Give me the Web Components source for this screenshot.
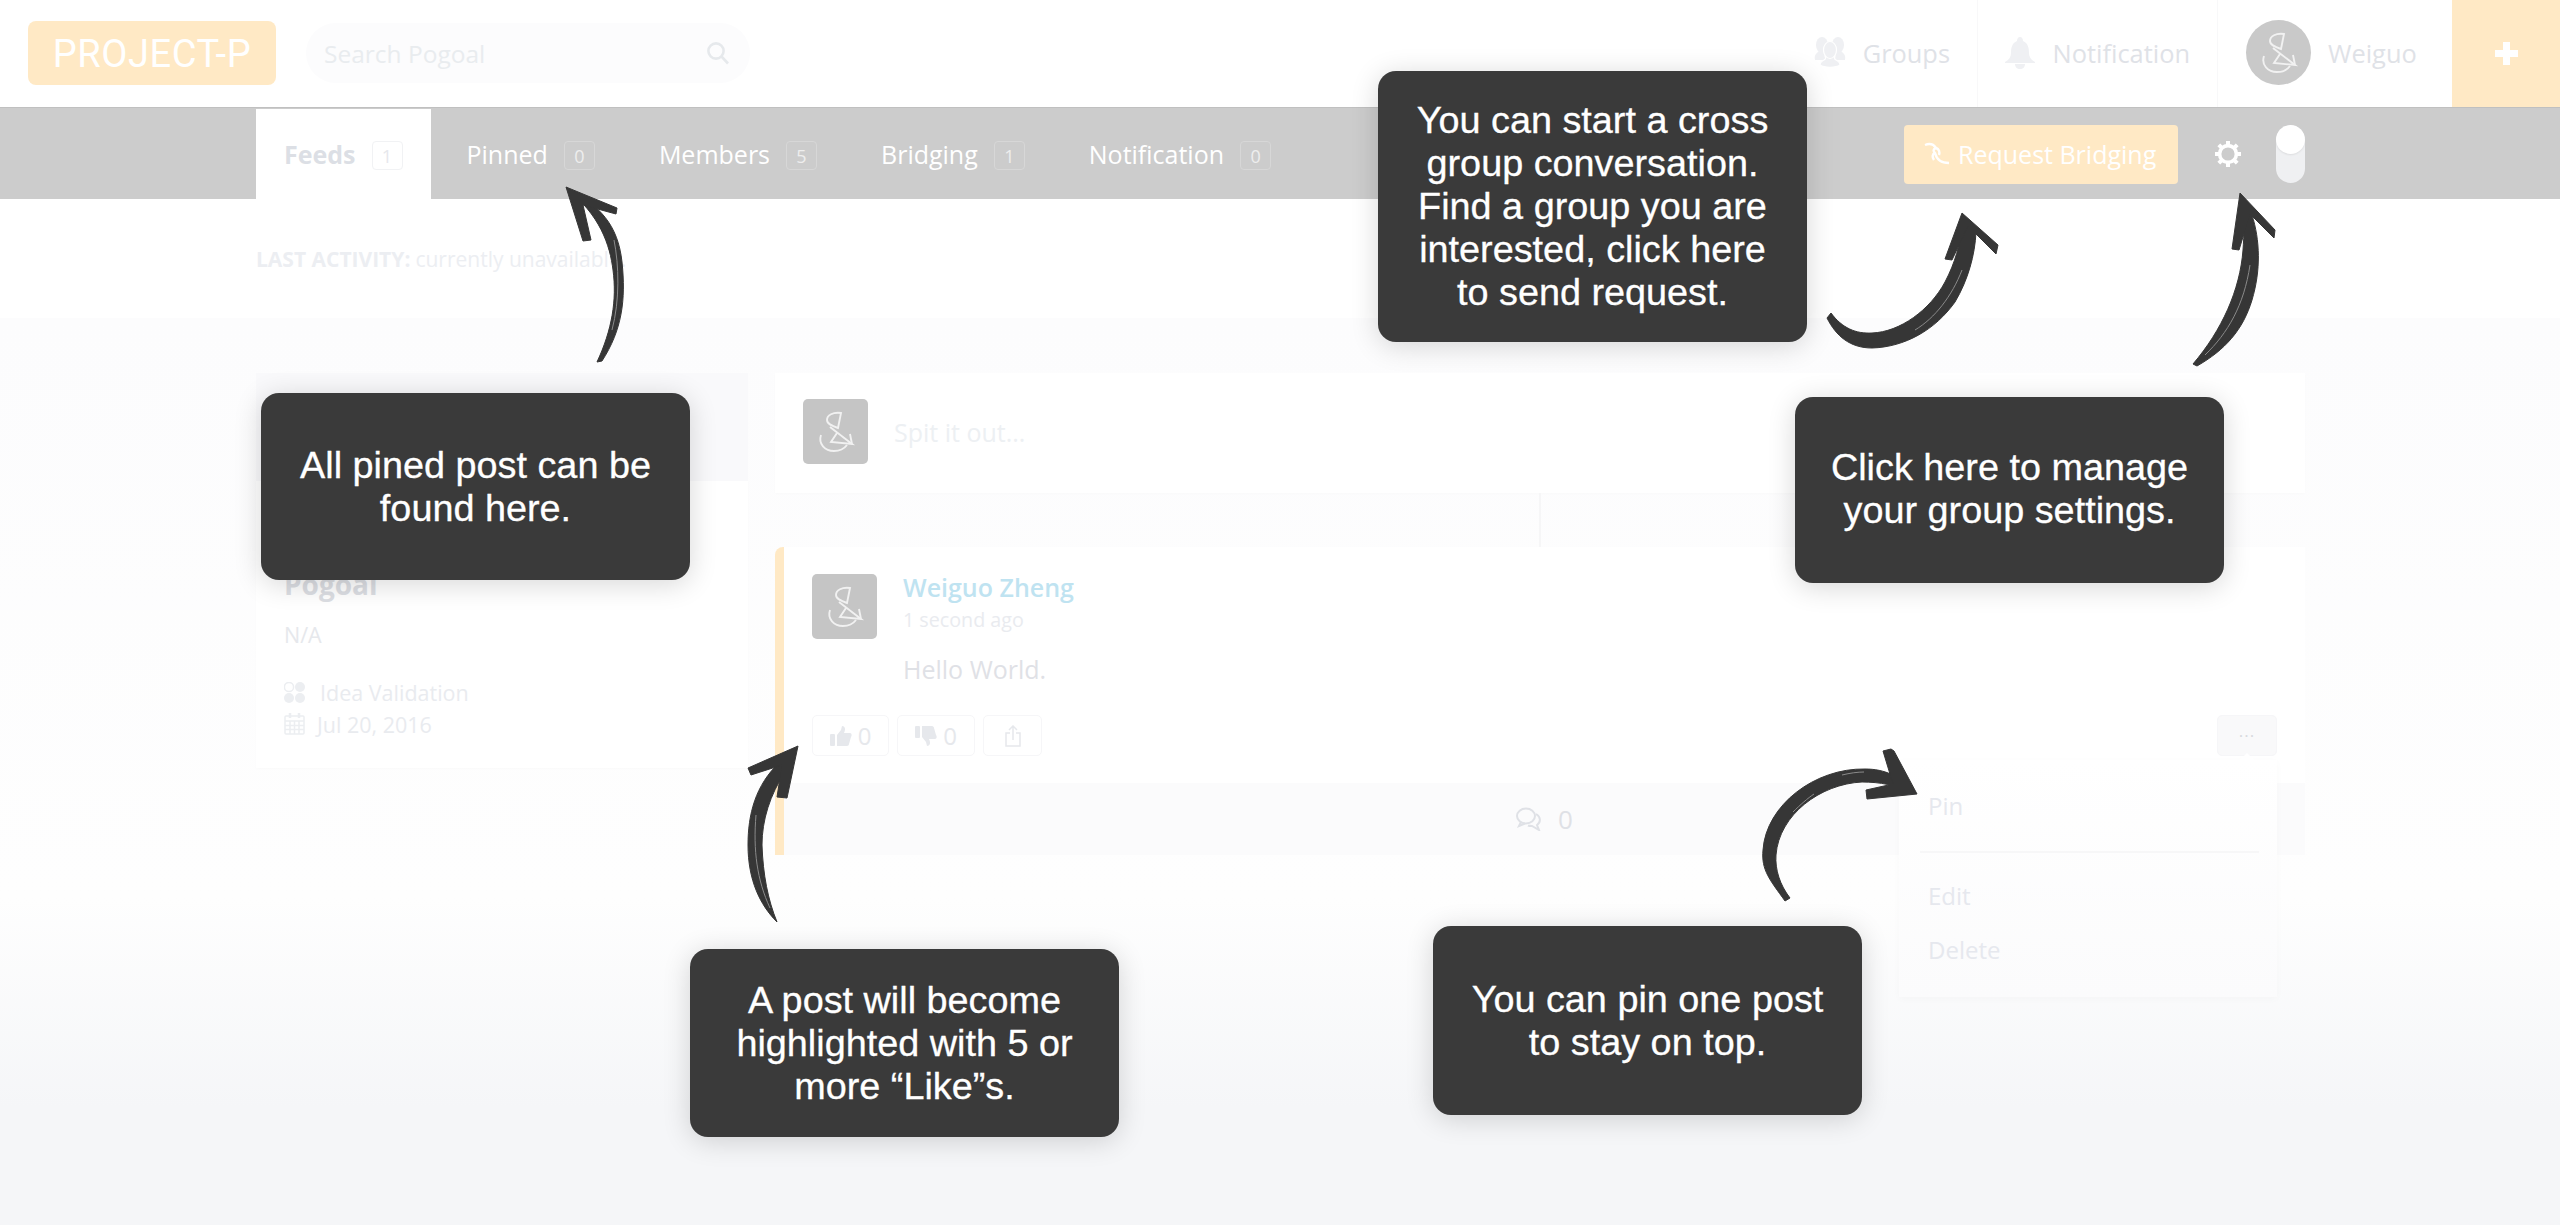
<!DOCTYPE html>
<html lang="en">
<head>
<meta charset="utf-8">
<title>Project-P</title>
<style>
  html, body { margin: 0; height: 1225px; overflow: hidden; background: #fff; font-family: "Open Sans", "Liberation Sans", sans-serif; }
  #page { display: flex; flex-direction: column; height: 1225px; position: relative; }
</style>
</head>
<body>
<div id="page">
  <top-nav></top-nav>
  <tab-bar></tab-bar>
  <activity-line></activity-line>
  <group-board>
    <group-card slot="side"></group-card>
    <post-composer slot="main"></post-composer>
    <feed-divider slot="main"></feed-divider>
    <post-card slot="main"></post-card>
  </group-board>

  <sketch-arrow box="556 180 80 190" shaft="M597 362 C612 330 617 300 613 270 C610 245 600 215 566 188 C600 205 618 225 622 262 C626 300 622 330 602 361 Z" head="566,187 617,208 616,214 583,205 591,240 583,241" shine="M614 240 C619 265 620 300 612 330"></sketch-arrow>
  <sketch-arrow box="1820 205 190 150" shaft="M1827 318 L1831 313 C1842 328 1856 334 1872 333 C1900 332 1930 310 1945 282 C1955 263 1960 245 1963 222 L1976 232 C1975 255 1968 280 1955 302 C1935 330 1905 347 1872 348 C1850 348 1836 336 1827 318 Z" head="1962,213 1998,245 1996,254 1968,226 1952,260 1945,259" shine="M1915 330 C1935 318 1952 296 1962 270"></sketch-arrow>
  <sketch-arrow box="2185 185 100 190" shaft="M2193 364 C2222 330 2240 290 2243 250 C2244 235 2245 220 2243 205 L2252 215 C2260 240 2261 270 2252 300 C2243 330 2225 350 2197 366 Z" head="2240,193 2275,230 2274,238 2250,214 2239,250 2232,249" shine="M2205 355 C2228 333 2244 305 2250 265"></sketch-arrow>
  <sketch-arrow box="740 740 65 190" shaft="M777 922 C760 905 748 880 748 845 C748 815 755 785 780 762 L785 772 C770 795 762 820 762 845 C763 875 768 900 777 922 Z" head="798,746 787,798 777,797 782,765 751,775 748,768" shine="M756 815 C753 850 757 880 770 908"></sketch-arrow>
  <sketch-arrow box="1755 740 170 170" shaft="M1785 901 C1770 880 1761 870 1763 850 C1766 805 1815 768 1865 769 C1885 769 1900 776 1916 793 C1895 785 1880 782 1862 782 C1820 784 1779 815 1776 855 C1775 870 1780 885 1790 898 Z" head="1883,751 1891,749 1894,751 1917,794 1867,799 1866,790 1893,784" shine="M1793 812 C1800 805 1808 798 1814 794 M1842 775 C1850 773 1858 772 1864 772"></sketch-arrow>

  <coach-tip style="left:261px;top:393px;height:187px">All pined post can be<br>found here.</coach-tip>
  <coach-tip style="left:1378px;top:71px;height:271px">You can start a cross<br>group conversation.<br>Find a group you are<br>interested, click here<br>to send request.</coach-tip>
  <coach-tip style="left:1795px;top:397px;height:186px;padding-bottom:2px;box-sizing:border-box">Click here to manage<br>your group settings.</coach-tip>
  <coach-tip style="left:690px;top:949px;height:188px">A post will become<br>highlighted with 5 or<br>more “Like”s.</coach-tip>
  <coach-tip style="left:1433px;top:926px;height:189px">You can pin one post<br>to stay on top.</coach-tip>
</div>

<script>
// Shared glyph of the default avatar
const MARK_PATHS = `
  <path d="M38 14 C30 13 24 16 24 21 C24 25 29 27 35 29 Z"/>
  <path d="M27 28 L49 45 L28 43 L34 34"/>
  <path d="M18 36 C15 45 22 52 31 52 C36 52 41 50 44 46"/>
  <path d="M47 35 L49 45"/>`;

class LogoMark extends HTMLElement {
  constructor() {
    super();
    const shadow = this.attachShadow({ mode: 'open' });
    const round = this.hasAttribute('round');
    shadow.innerHTML = `
      <style>
        :host { display: block; width: 65px; height: 65px; flex: none; }
        svg { display: block; width: 100%; height: 100%; background: ${round ? '#c9c9c9' : '#c5c5c5'}; border-radius: ${round ? '50%' : '5px'}; }
      </style>
      <svg viewBox="0 0 65 65" fill="none" stroke="#f1f1f1" stroke-width="1.9">${MARK_PATHS}</svg>`;
  }
}
customElements.define('logo-mark', LogoMark);

class TopNav extends HTMLElement {
  constructor() {
    super();
    const shadow = this.attachShadow({ mode: 'open' });
    shadow.innerHTML = `
      <style>
        :host { display: flex; height: 107px; flex: none; align-items: stretch; background: #fff; font-size: 25.4px; color: #dfe2e7; }
        .logo { margin: 21px 0 0 28px; width: 248px; height: 64px; padding-top: 2px; box-sizing: border-box; display: flex; align-items: center; justify-content: center; background: #ffe9c5; border-radius: 8px; color: #fff; font: 400 38px Roboto, sans-serif; letter-spacing: 0.6px; }
        .search { margin: 23px 0 0 30px; width: 444px; height: 60px; box-sizing: border-box; padding: 0 20px 0 18px; display: flex; align-items: center; justify-content: space-between; background: #fcfcfd; border-radius: 30px; color: #e9ecef; font-size: 24.5px; }
        .grow { flex: 1; }
        .item { display: flex; align-items: center; height: 100%; box-sizing: border-box; border-right: 1px solid #f8f8f9; padding-bottom: 2px; }
        .groups { width: 178px; gap: 17px; justify-content: flex-end; padding-right: 27px; }
        .notes { width: 240px; gap: 18px; justify-content: flex-end; padding-right: 27px; }
        .user { width: 234px; gap: 17px; padding-left: 28px; border-right: 0; }
        .plus { width: 108px; background: #ffe9c5; display: flex; align-items: center; justify-content: center; }
      </style>
      <div class="logo">PROJECT-P</div>
      <div class="search">
        <span>Search Pogoal</span>
        <svg width="24" height="24" viewBox="0 0 24 24" fill="none" stroke="#e6e9ec" stroke-width="2.6"><circle cx="10" cy="10" r="7.6"/><path d="M15.5 15.5 L22 22.5"/></svg>
      </div>
      <div class="grow"></div>
      <div class="item groups">
        <svg width="32" height="31" viewBox="0 0 32 31" fill="#eff0f3">
          <ellipse cx="8" cy="8" rx="6" ry="8"/>
          <ellipse cx="24" cy="8" rx="6" ry="8"/>
          <path d="M5 14 H11 V23 H1 C0 18 2 17 5 14 Z"/>
          <path d="M27 14 H21 V23 H31 C32 18 30 17 27 14 Z"/>
          <g stroke="#fff" stroke-width="1.2">
            <path d="M11 19 C12 21 12 22 10 23 C8 24 6 25 6 28 C10 31 22 31 26 28 C26 25 24 24 22 23 C20 22 20 21 21 19 Z"/>
            <ellipse cx="16" cy="13" rx="6.500" ry="8.500"/>
          </g>
        </svg>
        <span>Groups</span>
      </div>
      <div class="item notes">
        <svg width="30" height="32" viewBox="0 0 30 32" fill="#eff0f3">
          <path d="M15 0 C17 0 18 2 18 4 C23 6 24 11 24 16 C24 20 26 23 30 25 L30 26 L0 26 L0 25 C4 23 6 20 6 16 C6 11 7 6 12 4 C12 2 13 0 15 0 Z"/>
          <path d="M10 27 L20 27 C20 30 18 32 15 32 C12 32 10 30 10 27 Z"/>
        </svg>
        <span>Notification</span>
      </div>
      <div class="item user">
        <logo-mark round></logo-mark>
        <span>Weiguo</span>
      </div>
      <div class="plus">
        <svg width="23" height="23" viewBox="0 0 23 23" fill="#fff"><path d="M8 0 H15 V8 H23 V15 H15 V23 H8 V15 H0 V8 H8 Z"/></svg>
      </div>`;
  }
}
customElements.define('top-nav', TopNav);

class TabItem extends HTMLElement {
  constructor() {
    super();
    const shadow = this.attachShadow({ mode: 'open' });
    shadow.innerHTML = `
      <style>
        :host { display: flex; align-items: center; gap: 16px; padding: 0 32px; color: #fff; font-size: 25px; }
        :host([active]) { background: #fff; color: #dcdfe5; font-weight: 700; padding: 0 28px; }
        .count { box-sizing: border-box; width: 31px; height: 29px; margin-top: 3px; display: flex; align-items: center; justify-content: center; font-size: 18px; font-weight: 400; border: 1px solid #d7d7d7; border-radius: 4px; color: #eee; }
        :host([active]) .count { border-color: #f1f2f4; color: #e6e8ec; }
      </style>
      <slot></slot>
      <span class="count">${this.getAttribute('count')}</span>`;
  }
}
customElements.define('tab-item', TabItem);

class TabBar extends HTMLElement {
  constructor() {
    super();
    const shadow = this.attachShadow({ mode: 'open' });
    shadow.innerHTML = `
      <style>
        :host { display: flex; height: 92px; flex: none; box-sizing: border-box; padding: 1px 255px 0 256px; background: #ccc; border-top: 1px solid #c0c0c0; }
        .tabs { display: flex; flex: 1; }
        .tabs tab-item:nth-child(2) { margin-left: 4px; }
        .tools { display: flex; align-items: center; }
        .request { box-sizing: border-box; width: 274px; height: 59px; display: flex; align-items: center; padding-left: 20px; gap: 8px; background: #ffe9c5; border-radius: 4px; color: #fff; font-size: 25px; }
        .gear { margin-left: 36px; display: block; }
        .toggle { margin-left: 34px; width: 29px; height: 58px; border-radius: 15px; background: #eff0f2; position: relative; overflow: hidden; }
        .toggle i { display: block; height: 29px; border-radius: 15px; background: #fff; box-shadow: 0 1px 2px rgba(0,0,0,.08); }
      </style>
      <div class="tabs">
        <tab-item active count="1">Feeds</tab-item>
        <tab-item count="0">Pinned</tab-item>
        <tab-item count="5">Members</tab-item>
        <tab-item count="1">Bridging</tab-item>
        <tab-item count="0">Notification</tab-item>
      </div>
      <div class="tools">
        <div class="request">
          <svg width="26" height="24" viewBox="0 0 26 24" fill="none" stroke="#fff" stroke-width="2.4"><path d="M1 3 C6 1 10 3 12 6 C9 7 9 9 11 11 C12 15 15 21 25 21"/><path d="M12 6 C15 7 16 10 15 13"/><path d="M11 11 C8 12 8 15 10 18"/></svg>
          <span>Request Bridging</span>
        </div>
        <svg class="gear" width="28" height="28" viewBox="0 0 28 28" fill="none" stroke="#fff"><circle cx="14" cy="14" r="8.4" stroke-width="3.6"/><path stroke-width="4" d="M14 1 V5 M14 23 V27 M1 14 H5 M23 14 H27 M4.800 4.800 L7.600 7.600 M20.400 20.400 L23.200 23.200 M4.800 23.200 L7.600 20.400 M20.400 7.600 L23.200 4.800"/></svg>
        <div class="toggle"><i></i></div>
      </div>`;
  }
}
customElements.define('tab-bar', TabBar);

class ActivityLine extends HTMLElement {
  constructor() {
    super();
    const shadow = this.attachShadow({ mode: 'open' });
    shadow.innerHTML = `
      <style>
        :host { display: flex; align-items: center; height: 119px; flex: none; box-sizing: border-box; padding: 0 256px 0; background: #fff; color: #eceef2; font-size: 21px; }
        b { font-weight: 700; margin-right: 5px; }
      </style>
      <b>LAST ACTIVITY:</b> currently unavailable.`;
  }
}
customElements.define('activity-line', ActivityLine);

class GroupBoard extends HTMLElement {
  constructor() {
    super();
    const shadow = this.attachShadow({ mode: 'open' });
    shadow.innerHTML = `
      <style>
        :host { display: grid; grid-template-columns: 492px 1530px; column-gap: 27px; align-content: start; align-items: start; flex: 1; padding: 55px 256px 0; background: linear-gradient(#fcfcfd 0, #fefefe 580px, #f5f6f8 790px); }
        .col { display: flex; flex-direction: column; }
      </style>
      <div class="col"><slot name="side"></slot></div>
      <div class="col"><slot name="main"></slot></div>`;
  }
}
customElements.define('group-board', GroupBoard);

class GroupCard extends HTMLElement {
  constructor() {
    super();
    const shadow = this.attachShadow({ mode: 'open' });
    shadow.innerHTML = `
      <style>
        :host { display: block; color: #e9ebef; font-size: 21.5px; }
        .cover { height: 108px; background: #f9f9fb; }
        .body { height: 287px; box-sizing: border-box; padding: 84px 28px 0; background: #fff; box-shadow: 0 1px 3px rgba(0,0,0,.02); }
        h2 { margin: 0; font-size: 28px; line-height: 38px; font-weight: 700; color: #dcdee3; }
        .na { margin-top: 18px; line-height: 28px; color: #e6e8ec; }
        .row { display: flex; align-items: center; height: 32px; gap: 15px; }
        .row.first { margin-top: 27px; }
        .row.date { gap: 12px; }
      </style>
      <div class="cover"></div>
      <div class="body">
        <h2>Pogoal</h2>
        <div class="na">N/A</div>
        <div class="row first">
          <svg width="21" height="21" viewBox="0 0 21 21" fill="#eceef1"><circle cx="5" cy="5" r="4.6" fill="none" stroke="#eceef1" stroke-width="1.5"/><circle cx="16" cy="5" r="5"/><circle cx="5" cy="16" r="5"/><circle cx="16" cy="16" r="5"/></svg>
          <span>Idea Validation</span>
        </div>
        <div class="row date">
          <svg width="21" height="22" viewBox="0 0 21 22" fill="none" stroke="#eceef1" stroke-width="1.5"><rect x="1" y="3" width="19" height="18" rx="1"/><path d="M1 8 H20 M1 12.5 H20 M1 16.5 H20 M6 8 V21 M10.5 8 V21 M15 8 V21"/><path d="M6 0 V5 M15 0 V5" stroke-width="2.5"/></svg>
          <span>Jul 20, 2016</span>
        </div>
      </div>`;
  }
}
customElements.define('group-card', GroupCard);

class PostComposer extends HTMLElement {
  constructor() {
    super();
    const shadow = this.attachShadow({ mode: 'open' });
    shadow.innerHTML = `
      <style>
        :host { display: flex; align-items: center; gap: 26px; height: 120px; box-sizing: border-box; padding: 0 28px 3px; background: #fff; box-shadow: 0 1px 3px rgba(0,0,0,.015); color: #edf0f3; font-size: 25px; }
      </style>
      <logo-mark></logo-mark>
      <span>Spit it out...</span>`;
  }
}
customElements.define('post-composer', PostComposer);

class FeedDivider extends HTMLElement {
  constructor() {
    super();
    const shadow = this.attachShadow({ mode: 'open' });
    shadow.innerHTML = `
      <style>
        :host { display: flex; justify-content: center; height: 54px; }
        i { display: block; width: 2px; background: #f6f6f7; }
      </style>
      <i></i>`;
  }
}
customElements.define('feed-divider', FeedDivider);

class PostMenu extends HTMLElement {
  constructor() {
    super();
    const shadow = this.attachShadow({ mode: 'open' });
    shadow.innerHTML = `
      <style>
        :host { position: absolute; top: 45px; right: 0; width: 378px; height: 237px; box-sizing: border-box; padding: 28px 18px 0 21px; background: linear-gradient(#fff, #fbfbfc); box-shadow: 0 2px 8px rgba(0,0,0,.025); color: #e6e8ee; font-size: 24px; }
        :host::before { content: ""; position: absolute; top: -7px; right: 22px; border: 8px solid transparent; border-top: 0; border-bottom-color: #fff; }
        .pin, .edit, .del { padding-left: 8px; line-height: 36px; }
        hr { border: 0; height: 2px; background: #f7f7f8; margin: 27px 0 25px; }
        .del { margin-top: 18px; }
      </style>
      <div class="pin">Pin</div>
      <hr>
      <div class="edit">Edit</div>
      <div class="del">Delete</div>`;
  }
}
customElements.define('post-menu', PostMenu);

class PostCard extends HTMLElement {
  constructor() {
    super();
    const shadow = this.attachShadow({ mode: 'open' });
    shadow.innerHTML = `
      <style>
        :host { display: block; height: 308px; box-sizing: border-box; border-left: 9px solid #ffe9c5; border-radius: 8px 0 0 0; background: #fff; color: #e6e8ec; }
        .top { box-sizing: border-box; height: 236px; padding: 27px 28px 0 28px; }
        .head { display: flex; gap: 26px; height: 141px; }
        .name { color: #bfe3f1; font-size: 25px; font-weight: 600; line-height: 30px; margin-top: -2px; }
        .time { color: #e9ebef; font-size: 19.7px; line-height: 28px; margin-top: 4px; }
        .text { color: #dfe1e6; font-size: 25px; line-height: 34px; margin-top: 18px; }
        .actions { display: flex; gap: 8px; height: 41px; font-size: 24px; }
        .btn { box-sizing: border-box; display: flex; align-items: center; justify-content: center; gap: 6px; height: 41px; border: 1px solid #f6f6f8; border-radius: 5px; }
        .like { width: 77px; } .dislike { width: 78px; } .share { width: 59px; }
        .more-wrap { position: relative; margin-left: auto; }
        .more { width: 60px; background: #f9f9fa; padding-bottom: 10px; font-size: 17px; color: #d8dade; letter-spacing: 1px; }
        .foot { height: 72px; display: flex; align-items: center; justify-content: center; gap: 16px; background: #fbfbfc; font-size: 26px; color: #dfe1e6; }
      </style>
      <div class="top">
        <div class="head">
          <logo-mark></logo-mark>
          <div>
            <div class="name">Weiguo Zheng</div>
            <div class="time">1 second ago</div>
            <div class="text">Hello World.</div>
          </div>
        </div>
        <div class="actions">
          <div class="btn like">
            <svg width="22" height="20" viewBox="0 0 22 20" fill="#e6e8ec"><rect x="0" y="8" width="5" height="12" rx="1"/><path d="M7 9 L11 4 L12 0 C15 0 16 3 14 7 L20 7 C22 7 22 10 21 11 L19 18 C19 19 18 20 17 20 L7 20 Z"/></svg>
            <span>0</span>
          </div>
          <div class="btn dislike">
            <svg width="22" height="20" viewBox="0 0 22 20" fill="#e6e8ec"><rect x="0" y="0" width="5" height="12" rx="1"/><path d="M7 11 L11 16 L12 20 C15 20 16 17 14 13 L20 13 C22 13 22 10 21 9 L19 2 C19 1 18 0 17 0 L7 0 Z"/></svg>
            <span>0</span>
          </div>
          <div class="btn share">
            <svg width="16" height="22" viewBox="0 0 16 22" fill="none" stroke="#e6e8ec" stroke-width="1.5"><path d="M5 8 H1 V21 H15 V8 H11"/><path d="M8 15 V1 M4 5 L8 1 L12 5"/></svg>
          </div>
          <div class="more-wrap">
            <div class="btn more">...</div>
            <post-menu></post-menu>
          </div>
        </div>
      </div>
      <div class="foot">
        <svg width="26" height="24" viewBox="0 0 26 24" fill="none" stroke="#dfe1e6" stroke-width="2"><ellipse cx="10" cy="9" rx="9" ry="7.5"/><path d="M5 15 L3 19 L9 16.5"/><path d="M20 7 C25 10 25 15 21 18 L23 23 L16 19 C14 19 13 19 12 18.5"/></svg>
        <span>0</span>
      </div>`;
  }
}
customElements.define('post-card', PostCard);

// Hand drawn arrow placed over the page, coordinates are page pixels
class SketchArrow extends HTMLElement {
  constructor() {
    super();
    const shadow = this.attachShadow({ mode: 'open' });
    const [x, y, w, h] = this.getAttribute('box').split(' ').map(Number);
    shadow.innerHTML = `
      <style>
        :host { position: absolute; left: ${x}px; top: ${y}px; width: ${w}px; height: ${h}px; z-index: 5; }
        svg { display: block; overflow: visible; }
      </style>
      <svg width="${w}" height="${h}" viewBox="${x} ${y} ${w} ${h}">
        <path d="${this.getAttribute('shaft')}" fill="#363636" stroke="#363636" stroke-linejoin="round"/>
        <polygon points="${this.getAttribute('head')}" fill="#363636" stroke="#363636" stroke-linejoin="round"/>
        <path d="${this.getAttribute('shine')}" fill="none" stroke="#8a8a8a" stroke-width="1"/>
      </svg>`;
  }
}
customElements.define('sketch-arrow', SketchArrow);

class CoachTip extends HTMLElement {
  constructor() {
    super();
    const shadow = this.attachShadow({ mode: 'open' });
    shadow.innerHTML = `
      <style>
        :host { position: absolute; z-index: 6; width: 429px; display: flex; align-items: center; justify-content: center; text-align: center; background: #3a3a3a; border-radius: 18px; box-shadow: 0 4px 28px rgba(0,0,0,.16); color: #fff; font: 400 37.8px/43px "Liberation Sans", Arial, sans-serif; -webkit-text-stroke: 0.3px #fff; }
      </style>
      <div><slot></slot></div>`;
  }
}
customElements.define('coach-tip', CoachTip);
</script>
</body>
</html>
